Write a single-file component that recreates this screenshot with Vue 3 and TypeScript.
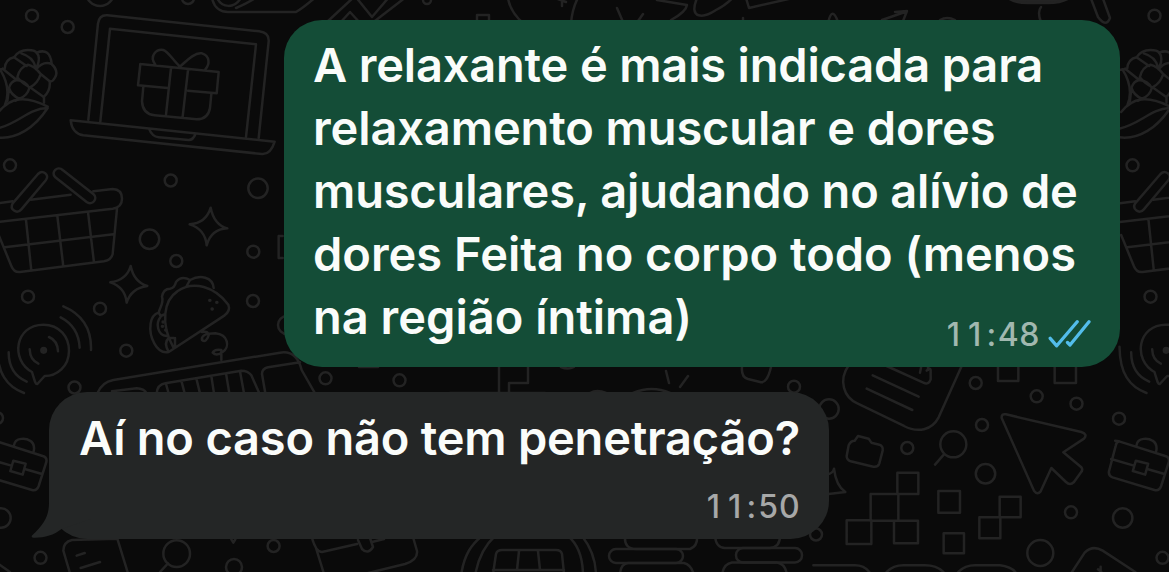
<script setup lang="ts">
interface Line {
  text: string
  spacing: number
}

interface Dot {
  x: number
  y: number
  r: number
}

const outgoing: Line[] = [
  { text: 'A relaxante é mais indicada para', spacing: -0.17 },
  { text: 'relaxamento muscular e dores', spacing: -0.11 },
  { text: 'musculares, ajudando no alívio de', spacing: -0.18 },
  { text: 'dores Feita no corpo todo (menos', spacing: 0 },
  { text: 'na região íntima)', spacing: 0 },
]

const incoming: Line[] = [{ text: 'Aí no caso não tem penetração?', spacing: -0.22 }]

const sentAt = '11:48'
const receivedAt = '11:50'

// Dots of the wallpaper that repeat with every tile
const tileDots: Dot[] = [
  { x: 32, y: 15.7, r: 6 },
  { x: 10, y: 165.3, r: 6 },
  { x: 28, y: 296.7, r: 6 },
]

const dots: Dot[] = [
  { x: 67.7, y: 27, r: 6 },
  { x: 188, y: -2, r: 6 },
  { x: 100, y: -8, r: 14 },
  { x: 170.7, y: 180.5, r: 6 },
  { x: 258, y: 188.3, r: 9.7 },
  { x: 149.5, y: 239.3, r: 9.7 },
  { x: 176.3, y: 261, r: 6 },
  { x: 253.3, y: 251.7, r: 6 },
  { x: 253, y: 301, r: 6 },
  { x: 287, y: 325, r: 9 },
  { x: 100, y: 308.7, r: 6 },
  { x: 126.3, y: 350.7, r: 6 },
  { x: 74.5, y: 387.5, r: 6 },
  { x: -3, y: 418, r: 6 },
  { x: 1, y: 518, r: 9.7 },
  { x: 40.5, y: 557.8, r: 6 },
  { x: 273.6, y: 546, r: 6 },
  { x: 234, y: 567, r: 8 },
  { x: 325.5, y: 378.3, r: 6 },
  { x: 399.5, y: 380.3, r: 6 },
  { x: 794, y: 386.7, r: 6 },
  { x: 829, y: 409, r: 9.7 },
  { x: 975.7, y: 383, r: 6 },
  { x: 1036.7, y: 396.3, r: 6 },
  { x: 1076.5, y: 403.7, r: 6 },
  { x: 1119, y: 418.7, r: 6 },
  { x: 982, y: 425, r: 6 },
  { x: 907.3, y: 448, r: 6 },
  { x: 985.5, y: 473.7, r: 9.7 },
  { x: 1071, y: 512.3, r: 6 },
  { x: 1122.7, y: 518, r: 9.7 },
  { x: 1040.3, y: 553, r: 13 },
  { x: 1162.5, y: 557.8, r: 6 },
  { x: 816, y: 534.5, r: 6 },
  { x: 427, y: 0, r: 4 },
]
</script>

<template>
  <main class="chat">
    <svg class="wallpaper" viewBox="0 0 1169 572" aria-hidden="true">
      <defs>
        <g id="tile">
          <!-- corn -->
          <g transform="scale(.33333)">
            <path d="M-10 412C50 420 105 382 143 324C85 325 55 372 -10 386M-4 336C30 292 75 285 143 320M0 208C20 240 30 280 14 318" />
            <path d="M-10 210L14 206Q16 178 42 172Q56 150 84 150Q104 150 110 158Q150 142 155 192Q178 215 164 234Q158 246 149 244Q152 272 132 290V308" />
            <path d="M8 206L50 240M42 172L80 198M64 160Q98 170 106 200M110 158Q122 172 112 198M84 194Q104 198 122 222Q114 250 90 262Q66 250 52 232Q58 202 84 194ZM50 240Q76 242 88 264Q82 288 58 296Q34 286 27 264Q32 244 50 240ZM27 264L22 304M58 296L46 302M108 208Q130 182 155 192M122 222L149 244M90 262L130 290" />
          </g>
          <!-- basket -->
          <g transform="translate(0 160) scale(.33333)">
            <path d="M-8 130L38 124M92 119L212 104M280 94L338 87Q366 88 366 116Q366 142 338 146L-8 186M-4 225L34 318Q42 338 60 336L312 304Q334 300 338 282L351 146M14 262L340 223M78 180L94 332M172 168L190 320M264 156L282 308" />
            <path d="M38 130L114 42C128 28 150 44 138 60L64 148C50 164 28 148 38 130Z" />
            <path d="M188 30L280 102C296 116 276 138 260 126L166 52C150 36 174 16 188 30Z" />
          </g>
          <!-- speech bubble with signal waves -->
          <g transform="translate(0 160) scale(.33333)">
            <path d="M96 636C30 600 45 494 130 494C180 494 207 532 207 572C207 620 170 648 134 648L112 672C106 674 104 662 96 636Z" />
            <circle cx="131" cy="571" r="7" fill="#242424" />
            <path d="M147 531Q173 542 174 574M89 568Q90 600 115 611M182 472Q236 500 239 563M190 439Q276 475 273 570M26 577C26 620 45 650 80 665M-9 560C-8 640 20 680 72 699" />
          </g>
          <!-- briefcase -->
          <g transform="translate(0 380) scale(.33333)">
            <path d="M-22 182L-10 184L128 228Q142 232 139 246L116 318Q110 334 96 330L-30 292Q-44 286 -40 272L-20 196Q-18 186 -10 184M42 196C45 170 80 175 90 182Q106 192 101 214M-34 237L34 257M74 267L126 282M40 242L77 251L68 284L31 273Z" />
          </g>
          <circle v-for="(d, i) in tileDots" :key="i" :cx="d.x" :cy="d.y" :r="d.r" />
        </g>
      </defs>

      <use href="#tile" />
      <use href="#tile" x="1122.5" />
      <circle v-for="(d, i) in dots" :key="i" :cx="d.x" :cy="d.y" :r="d.r" />

      <!-- laptop with a gift -->
      <g transform="scale(.33333)">
        <path d="M265 360L294 70Q298 44 322 46L778 94Q808 98 806 124L776 414M301 365L330 86L768 133L738 411" />
        <path d="M212 361L824 425Q812 464 786 462L250 406Q216 400 212 361ZM447 386Q456 410 476 412L566 420Q580 420 586 402" />
        <path d="M421 192L656 216L650 280L564 272M503 264L414 256L421 192M430 260L426 304Q428 342 464 346L590 358Q624 358 630 324L634 282M513 204L498 344M564 210L548 350M466 194C446 168 470 146 490 150C505 155 520 182 540 200C560 182 585 156 606 160C630 168 630 192 616 208" />
      </g>

      <!-- rolled paper and scribbles along the top edge -->
      <path d="M212 -2C214 8 221 12 228 12H296Q303 8 317 -4M217 -2C222 8 234 9 241 -2M236 8Q248 3 257 -3" />
      <path d="M327 22L355 -4L372 17L390 -4M339 24L350 12L361 24M371 24L406 -3M477 24V15H489V24M508 -2Q510 12 524 24M579 -4Q572 8 571 24M555 -2L566 2M562 0V6M617 8L623 22M643 14L636 24M657 0L687 5Q686 12 671 20M697 -2C688 20 704 18 716 10Q728 4 735 -5M746 -2L749 8L793 -2M743 18V22M828 23Q832 5 838 22M882 20L905 12M895 12L907 11L903 21M940 20Q947 16 955 20" />
      <path d="M1090 -4L1098 17Q1106 28 1110 18L1102 -4M1041 7Q1037 12 1041 22" />
      <path d="M1006 -4Q1012 3 1028 3H1048Q1064 3 1072 -4Z" fill="#242424" />

      <!-- stars and taco -->
      <g transform="translate(0 160) scale(.33333)">
        <path d="M632 143Q642 194 682 205Q633 208 620 256Q616 208 569 193Q618 190 632 143ZM392 318Q402 366 442 378Q394 384 380 428Q376 382 331 367Q380 360 392 318Z" />
        <path d="M520 562C480 490 492 420 532 394C580 360 645 380 685 434Q692 452 674 466L506 576C470 584 446 530 452 490Q456 464 476 458C480 440 492 430 486 410Q490 386 510 386Q524 384 528 366Q545 346 570 360C600 344 638 350 641 384M570 360L560 378M476 458L482 468L496 462M482 470C466 490 472 525 500 528M506 576Q490 548 506 534L520 534M525 534V562M606 516Q626 512 626 526Q618 550 606 540Q602 520 646 520C686 524 690 562 668 576Q650 590 638 578Q644 566 664 570V600" />
        <path class="specks" d="M629 421h1M650 427h1M636 447h1M489 486h1M487 499h1M497 510h1" />
        <path d="M848 228H836V294H848" />
        <path d="M292 700Q306 666 340 660L840 578Q890 570 905 630L945 700M336 694L410 685Q432 686 440 700M470 700Q472 674 496 670L724 632Q744 632 754 646L778 700M498 672L506 700M544 662L554 700M589 655L600 700M634 648L642 700M678 640L688 700M720 634L732 700M796 700L786 642Q786 626 804 622L900 607" />
      </g>

      <!-- gap between the two messages -->
      <path d="M359 367H378M499 365V393M528 365V383H509V393M561 367Q568 370 574 367M666 371L669 383M688 376L680 387M742 367Q741 377 748 379L760 382Q767 384 771 367M450 393H545M590 393Q597 389 606 393M633 393Q652 385 670 393" />

      <!-- document, cursor, magnifier, squares -->
      <g transform="translate(820 350) scale(.33333)">
        <path d="M86 46C54 92 72 142 112 160L252 228C294 250 336 240 356 202L424 50M158 76L296 140M140 116L277 180M200 48L310 98Q326 106 332 88V60Q330 52 320 62M304 48L300 68M324 46V60" />
        <path d="M534 48V93H595V48M704 48V99H768V48" />
        <path d="M558 193L784 246Q804 252 792 266L730 307L784 352Q790 360 782 368L762 396Q750 408 738 396L694 354L662 424Q652 436 642 422L545 204Q544 190 558 193Z" />
        <circle cx="400" cy="283" r="39" /><path d="M372 313L345 344" />
        <path d="M104 272L114 258L146 266L154 278L178 284Q190 288 188 302L178 340Q174 352 160 350L92 334Q80 330 80 318L86 286Q92 272 104 272ZM20 374Q40 370 42 356Q48 408 76 426L26 432" />
        <path d="M232 368H295V432H232ZM152 432H235V512H152ZM80 511H154V582H80ZM222 512H294V580H222ZM355 423H420V488H355ZM539 440H602V502H539ZM478 502H541V565H478ZM371 550H432V610H371Z" />
        <path d="M756 666L794 608Q818 584 848 602L946 666M-20 646H105Q132 646 148 666M200 666Q220 646 250 646H315Q350 646 370 666M415 666Q435 646 465 646H540Q572 650 586 666M842 650V666M834 658L844 666" />
      </g>

      <!-- bottom edge -->
      <g transform="translate(0 380) scale(.33333)">
        <path d="M210 580L190 512Q190 486 216 480L352 476L384 580M230 527L254 519M242 564L300 546M480 576L504 550M694 478L700 488L706 478M-10 548L30 576" />
        <circle cx="530" cy="521" r="40" />
      </g>
      <path d="M312 538Q316 552 322 552L357 544M316 548L324 574M372 542L384 539M413 537L417 551Q418 560 405 564L364 574M358 540L362 549Q368 555 373 547L370 538" />
      <path d="M461 576C464 554 472 544 482 536M475 576C478 558 484 546 495 536M568 536C580 546 583 560 583 576M582 536C593 550 596 564 596 576M493 574L496 554Q497 550 502 550H556Q561 550 562 554L564 574M519 551L517 570M538 551L540 570M493 570H564M625 536Q624 549 636 549H690Q698 546 697 536M715 536Q716 548 725 548H770Q780 547 780 536" />
      <rect x="609" y="549" width="74" height="14" rx="7" />
      <rect x="736" y="548" width="66" height="14.500" rx="7" />
      <path d="M620 576Q620 564 628 563H684Q692 565 694 576M722 576Q723 564 732 562.500H777Q786 564 787 576" />
    </svg>

    <section class="bubble sent">
      <p class="text">
        <span v-for="line in outgoing" :key="line.text" class="line" :style="{ letterSpacing: line.spacing + 'px' }">{{ line.text }}</span>
      </p>
      <footer class="meta">
        <time class="time"><span v-for="(c, i) in sentAt" :key="i" class="digit" :class="{ colon: c === ':' }">{{ c }}</span></time>
        <svg class="ticks" viewBox="0 0 44 30" aria-label="Lida">
          <path d="M2.200 18.300L8.700 25.800L29.200 1.800M19.500 22.500L22 25L41 1.800" />
        </svg>
      </footer>
    </section>

    <section class="bubble received">
      <svg class="tail" viewBox="0 0 60 60" aria-hidden="true">
        <path d="M18 0V24C18 38 12 46 1 56.500C0 58 1 58.700 4 58.700C14 58.700 23 56 30.500 50L60 40V0Z" />
      </svg>
      <p class="text">
        <span v-for="line in incoming" :key="line.text" class="line" :style="{ letterSpacing: line.spacing + 'px' }">{{ line.text }}</span>
      </p>
      <footer class="meta">
        <time class="time"><span v-for="(c, i) in receivedAt" :key="i" class="digit" :class="{ colon: c === ':' }">{{ c }}</span></time>
      </footer>
    </section>
  </main>
</template>

<style>
body {
  margin: 0;
  background: #0a0a0a;
}
</style>

<style scoped>
.chat {
  position: relative;
  box-sizing: border-box;
  width: 1169px;
  height: 572px;
  padding: 20px 49px 33px;
  display: flex;
  flex-direction: column;
  gap: 25px;
  overflow: hidden;
  background: #0a0a0a;
  font-family: Inter, "Liberation Sans", sans-serif;
}

.wallpaper {
  position: absolute;
  inset: 0;
  width: 1169px;
  height: 572px;
  fill: none;
  stroke: #232323;
  stroke-width: 2.500;
  stroke-linecap: round;
  stroke-linejoin: round;
}

.wallpaper g[transform] {
  stroke-width: 7.500;
}

.wallpaper .specks {
  stroke-width: 10;
}

.bubble {
  position: relative;
  box-sizing: border-box;
  border-radius: 38px;
}

.sent {
  align-self: flex-end;
  width: 836px;
  height: 347px;
  padding: 13px 29px;
  background: #144d37;
}

.received {
  align-self: flex-start;
  width: 780px;
  height: 147px;
  padding: 14px 30px;
  background: #242626;
}

.text {
  margin: 0;
  font-size: 47px;
  font-weight: 600;
  line-height: 63px;
  color: #fafcfa;
}

.line {
  display: block;
  width: max-content;
  white-space: pre;
}

.meta {
  position: absolute;
  right: 28px;
  bottom: 14px;
  display: flex;
  align-items: center;
  gap: 8px;
  font-size: 32px;
  font-weight: 500;
  line-height: 36px;
  color: #a1b8af;
}

.received .meta {
  right: 29px;
  color: #a7a8a8;
}

.time {
  display: flex;
}

.digit {
  width: 21.200px;
  text-align: center;
}

.digit.colon {
  width: 12.500px;
}

.ticks {
  width: 44px;
  height: 30px;
  fill: none;
  stroke: #53bdeb;
  stroke-width: 3.300;
  stroke-linecap: round;
  stroke-linejoin: round;
}

.tail {
  position: absolute;
  left: -18px;
  bottom: 0;
  width: 60px;
  height: 60px;
  fill: #242626;
}
</style>
